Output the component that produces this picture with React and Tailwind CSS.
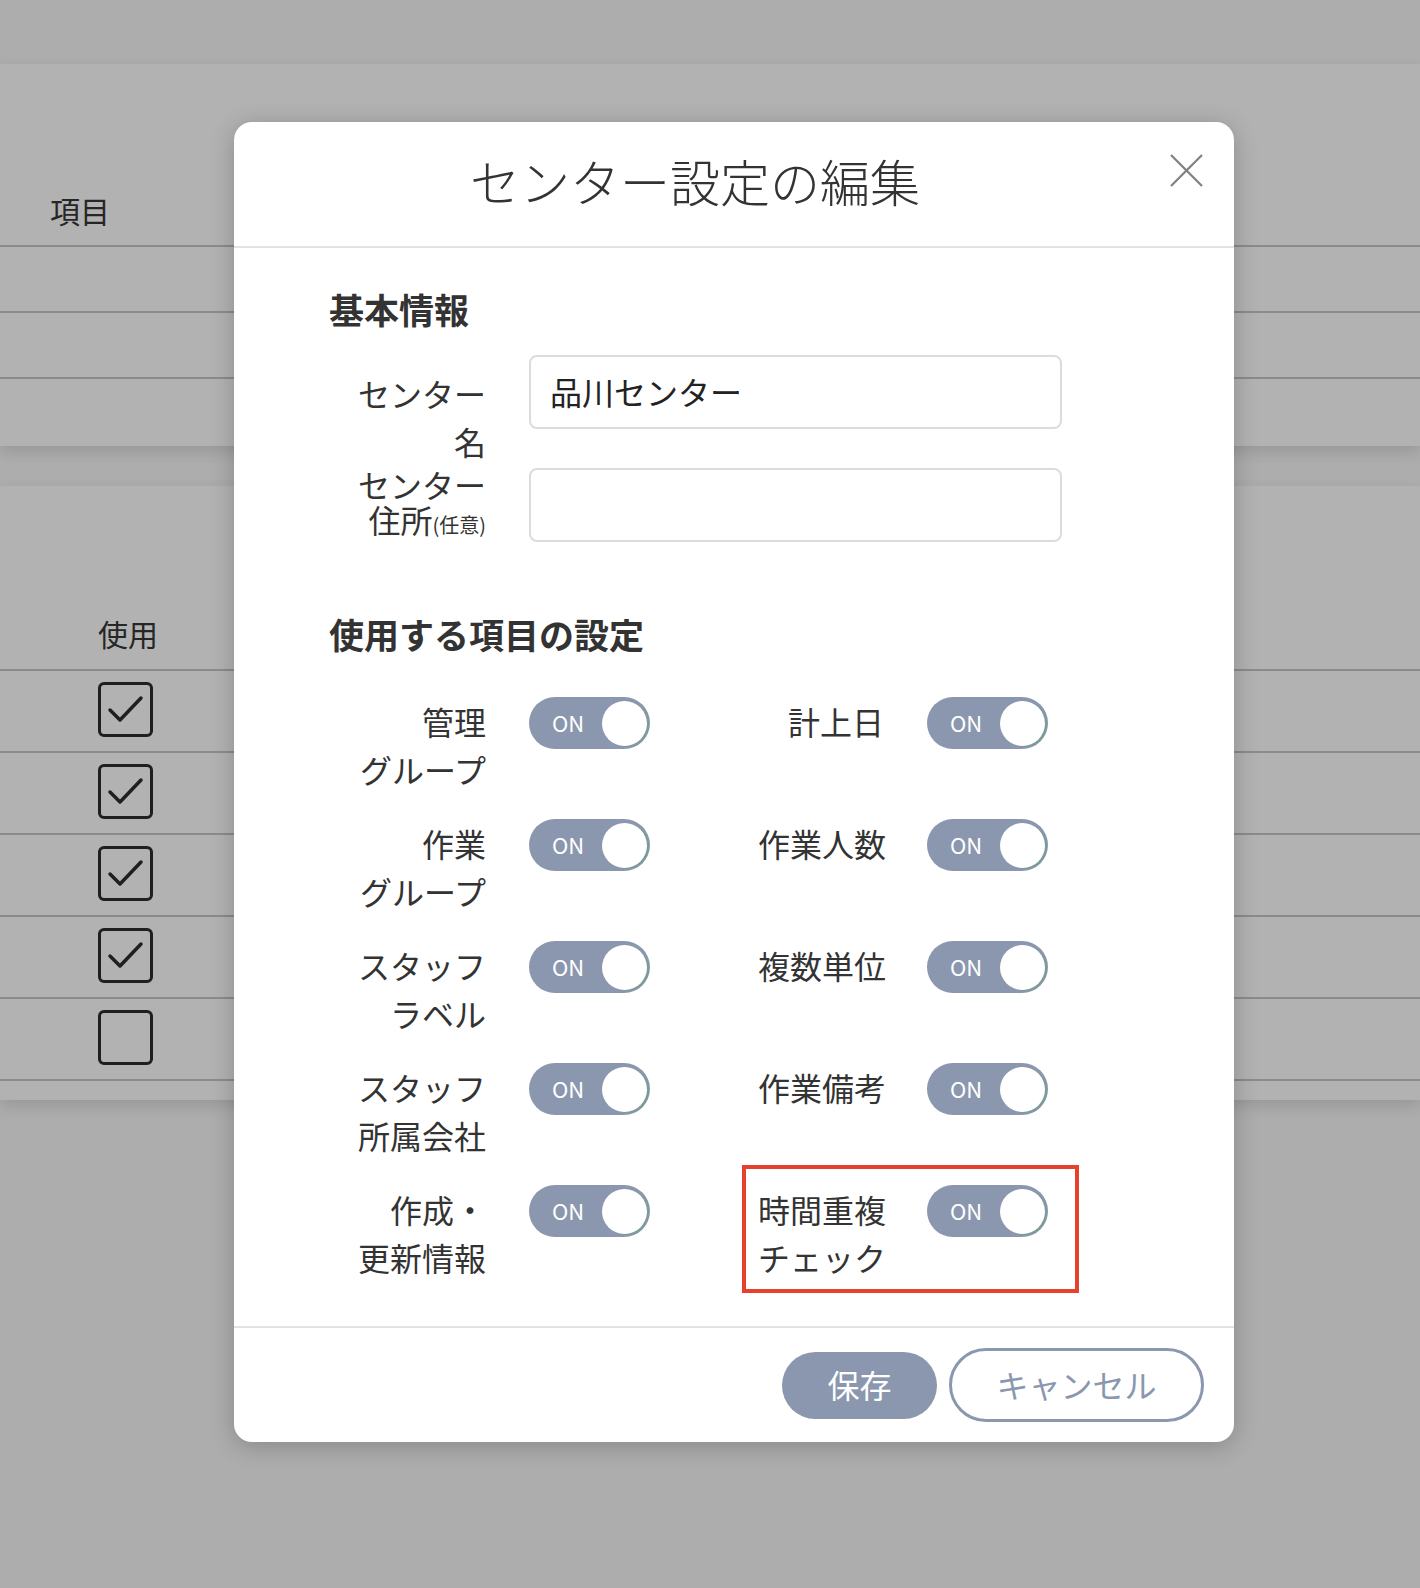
import React from 'react'

const leftItems = [
  ['管理', 'グループ'],
  ['作業', 'グループ'],
  ['スタッフ', 'ラベル'],
  ['スタッフ', '所属会社'],
  ['作成・', '更新情報'],
]

const rightItems = [['計上日'], ['作業人数'], ['複数単位'], ['作業備考'], ['時間重複', 'チェック']]

function Toggle() {
  return (
    <div className="flex h-[52px] w-[121px] shrink-0 items-center justify-between rounded-full bg-[#8a97ae] pl-[23px] pr-[3px]">
      <span className="-mt-[2px] font-['Noto_Sans_CJK_JP',sans-serif] text-[22px] leading-none text-white">ON</span>
      <span className="h-[45px] w-[45px] rounded-full bg-white shadow-[2px_1px_0_0_#7b9b97]" />
    </div>
  )
}

function CheckBox({ checked }) {
  return (
    <div className="-mt-[3px] ml-[98px] flex h-[55px] w-[55px] items-center justify-center rounded-[6px] border-[3px] border-[#1f1f1f]">
      {checked && (
        <svg width="49" height="49" viewBox="0 0 49 49" fill="none">
          <path d="M9 25 L19 35 L40 13" stroke="#1f1f1f" strokeWidth="3.5" strokeLinecap="round" strokeLinejoin="round" />
        </svg>
      )}
    </div>
  )
}

function Label({ lines, width }) {
  return (
    <div className={`${width} shrink-0 text-right text-[32px] leading-[48px] text-[#333]`}>
      {lines.map((l) => (
        <div key={l} className="whitespace-nowrap">{l}</div>
      ))}
    </div>
  )
}

export default function App() {
  return (
    <div className="relative h-[1588px] overflow-hidden bg-[#adadad] font-['Noto_Sans_CJK_JP',sans-serif] text-[#262626]">
      {/* page behind the overlay */}
      <div className="h-[64px]" />
      <section className="relative z-10 bg-[#b2b2b2] shadow-[0_6px_14px_rgba(0,0,0,0.12)]">
        <div className="flex h-[181px] items-end pb-[15px] pl-[50px] text-[30px] leading-[40px]">項目</div>
        <div className="h-[66px] border-t-2 border-[#8b8b8b]" />
        <div className="h-[66px] border-t-2 border-[#8b8b8b]" />
        <div className="h-[69px] border-t-2 border-[#8b8b8b]" />
      </section>
      <div className="h-[40px]" />
      <section className="bg-[#b2b2b2] shadow-[0_6px_14px_rgba(0,0,0,0.12)]">
        <div className="flex h-[183px] items-end pb-[16px] pl-[98px] text-[30px] leading-[40px]">使用</div>
        {[true, true, true, true, false].map((c, i) => (
          <div key={i} className="flex h-[82px] items-center border-t-2 border-[#8b8b8b]">
            <CheckBox checked={c} />
          </div>
        ))}
        <div className="h-[21px] border-t-2 border-[#8b8b8b]" />
      </section>

      {/* modal overlay */}
      <div className="absolute inset-0 z-20">
        <div className="absolute left-[234px] top-[122px] w-[1000px] rounded-[18px] bg-white shadow-[0_4px_24px_rgba(0,0,0,0.22)]">
          <header className="relative flex h-[124px] items-center pb-[8px] pr-[78px]">
            <h1 className="flex-1 text-center text-[50px] font-light leading-none text-[#333]">センター設定の編集</h1>
            <button className="absolute right-[31px] top-[32px] h-[33px] w-[33px]">
              <svg width="33" height="33" viewBox="0 0 33 33">
                <path d="M1 1 L32 32 M32 1 L1 32" stroke="#808080" strokeWidth="2.2" />
              </svg>
            </button>
          </header>
          <div className="border-t-2 border-[#e2e2e2]" />

          <div className="pb-[45px] pl-[95px] pt-[37px]">
            <h2 className="text-[35px] font-bold leading-[48px] text-[#333]">基本情報</h2>
            <div className="mt-[22px] flex items-start">
              <div className="mt-[14px] w-[157px] shrink-0 text-right text-[32px] leading-[48px] text-[#333]">
                <div>センター</div>
                <div>名</div>
              </div>
              <div className="ml-[43px] flex h-[74px] w-[533px] items-center rounded-[8px] border-2 border-[#dcdcdc] pb-[2px] pl-[19px] text-[32px] text-[#222]">
                品川センター
              </div>
            </div>
            <div className="mt-[2px] flex items-center">
              <div className="w-[157px] shrink-0 text-right text-[32px] leading-[35px] text-[#333]">
                <div>センター</div>
                <div>
                  住所<span className="text-[20px]">(任意)</span>
                </div>
              </div>
              <div className="ml-[43px] h-[74px] w-[533px] rounded-[8px] border-2 border-[#dcdcdc]" />
            </div>

            <h2 className="mt-[68px] text-[35px] font-bold leading-[48px] text-[#333]">使用する項目の設定</h2>
            <div className="mt-[39px] grid grid-cols-[413px_337px] gap-y-[26px]">
              {leftItems.map((left, i) => {
                const right = rightItems[i]
                const boxed = i === rightItems.length - 1
                return (
                  <React.Fragment key={i}>
                    <div className="flex items-start">
                      <Label lines={left} width="w-[157px]" />
                      <div className="ml-[43px]">
                        <Toggle />
                      </div>
                    </div>
                    <div
                      className={
                        boxed
                          ? '-mb-[12px] -mt-[20px] flex items-start self-start border-[4px] border-[#e5412d] pb-[8px] pl-[12px] pt-[16px]'
                          : 'flex items-start pl-[16px]'
                      }
                    >
                      <Label lines={right} width="w-[126px]" />
                      <div className="ml-[43px]">
                        <Toggle />
                      </div>
                    </div>
                  </React.Fragment>
                )
              })}
            </div>
          </div>

          <div className="border-t-2 border-[#e2e2e2]" />
          <footer className="flex items-center justify-end gap-[12px] py-[20px] pr-[30px]">
            <button className="flex h-[67px] w-[155px] items-center justify-center rounded-full bg-[#8a97ae] pb-[3px] text-[32px] text-white">
              保存
            </button>
            <button className="flex h-[74px] w-[255px] items-center justify-center rounded-full border-[3px] border-[#8a97ae] bg-white pb-[3px] text-[32px] text-[#8a97ae]">
              キャンセル
            </button>
          </footer>
        </div>
      </div>
    </div>
  )
}
